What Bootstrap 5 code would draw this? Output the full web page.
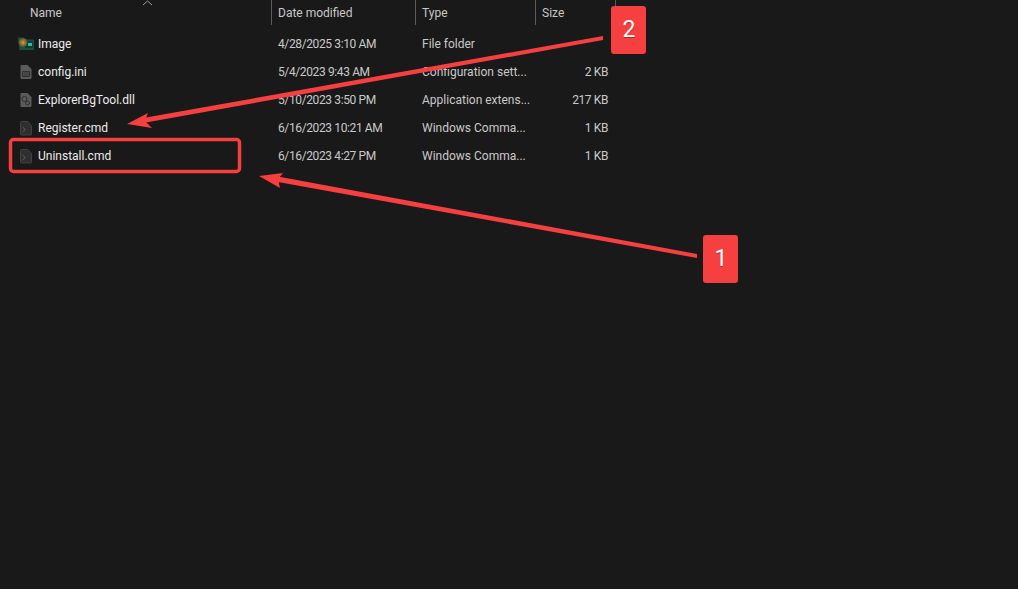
<!DOCTYPE html>
<html lang="en">
<head>
<meta charset="utf-8">
<title>Explorer folder</title>
<link rel="stylesheet" href="https://cdn.jsdelivr.net/npm/bootstrap@5.3.0/dist/css/bootstrap.min.css">
<style>
html, body { height: 100%; }
body { background: #191919; font-family: Roboto, "Noto Sans", sans-serif; font-size: 12px; color: #dcdcdc; overflow: hidden; }
.stage { width: 1018px; height: 589px; }
.file-grid { display: grid; grid-template-columns: 272px 144px 120px 80px; width: 616px; }
.head-cell { height: 25px; padding-left: 6px; color: #c8c8c8; border-right: 1px solid #5c5c5c; line-height: 27px; }
.head-cell.first { padding-left: 30px; }
.cell { height: 28px; line-height: 28px; padding-left: 6px; white-space: nowrap; overflow: hidden; color: #c9c9c9; }
.cell.fname { padding-left: 18px; color: #ececec; gap: 4px; }
.cell.fsize { text-align: right; padding: 0 8px 0 0; letter-spacing: -.4px; }
.cell.fdate { letter-spacing: -.38px; }
.rows-top { margin-top: 5px; }
.sort-caret { position: absolute; left: 142px; top: 0; }
.annot { position: absolute; left: 0; top: 0; pointer-events: none; }
.tag-num { position: absolute; width: 35px; height: 48px; padding-left: 1px; background: #f63f3f; color: #fff; border-radius: 3px; font-size: 23px; text-shadow: 0 1px 0 rgba(90,20,20,.5); }
.tag-one { left: 703px; top: 235px; }
.tag-two { left: 611px; top: 6px; }
</style>
</head>
<body>
<div class="stage position-relative">
  <svg class="sort-caret" width="11" height="6" viewBox="0 0 11 6"><path d="M1 5 L5.5 1 L10 5" fill="none" stroke="#9a9a9a"/></svg>
  <div class="file-grid">
    <div class="head-cell first">Name</div>
    <div class="head-cell">Date modified</div>
    <div class="head-cell">Type</div>
    <div class="head-cell">Size</div>

    <div class="cell fname d-flex align-items-center rows-top">
      <svg width="16" height="16" viewBox="0 0 16 16"><defs><radialGradient id="glow"><stop offset="0" stop-color="#d9a23a"/><stop offset=".6" stop-color="#8f6a2a"/><stop offset="1" stop-color="#3a5a3c"/></radialGradient></defs><path d="M0 1.500h6l1.500 2H15l1 1v9.500H1.500z" fill="#1c4f42"/><rect x="7" y="5" width="8" height="7" fill="#123a34"/><circle cx="5" cy="6.500" r="4.500" fill="url(#glow)"/><rect x="10" y="7" width="4" height="3" fill="#25c0a8"/></svg>
      <span>Image</span></div>
    <div class="cell fdate rows-top">4/28/2025 3:10 AM</div>
    <div class="cell rows-top">File folder</div>
    <div class="cell fsize rows-top"></div>

    <div class="cell fname d-flex align-items-center">
      <svg width="16" height="16" viewBox="0 0 16 16"><path d="M3.500 1h6l4 4v9a1 1 0 0 1-1 1h-9a1 1 0 0 1-1-1V2a1 1 0 0 1 1-1z" fill="#5a5a5a"/><path d="M4.500 7.500h7v5h-7z M5.500 9h5 M5.500 11h5" fill="none" stroke="#2f2f2f"/></svg>
      <span>config.ini</span></div>
    <div class="cell fdate">5/4/2023 9:43 AM</div>
    <div class="cell">Configuration sett...</div>
    <div class="cell fsize">2 KB</div>

    <div class="cell fname d-flex align-items-center">
      <svg width="16" height="16" viewBox="0 0 16 16"><path d="M3.500 1h6l4 4v9a1 1 0 0 1-1 1h-9a1 1 0 0 1-1-1V2a1 1 0 0 1 1-1z" fill="#5a5a5a"/><circle cx="6.500" cy="7" r="2.500" fill="none" stroke="#2f2f2f"/><circle cx="9.500" cy="11" r="2" fill="none" stroke="#2f2f2f"/></svg>
      <span>ExplorerBgTool.dll</span></div>
    <div class="cell fdate">5/10/2023 3:50 PM</div>
    <div class="cell">Application extens...</div>
    <div class="cell fsize">217 KB</div>

    <div class="cell fname d-flex align-items-center">
      <svg width="16" height="16" viewBox="0 0 16 16"><path d="M3.500 1.500h6l4 4v8.500a1 1 0 0 1-1 1h-9a1 1 0 0 1-1-1V2.500a1 1 0 0 1 1-1z" fill="#2f2f2f" stroke="#414141"/><path d="M4.500 7l3 2.500-3 2.500" fill="none" stroke="#5c5c5c"/></svg>
      <span>Register.cmd</span></div>
    <div class="cell fdate">6/16/2023 10:21 AM</div>
    <div class="cell">Windows Comma...</div>
    <div class="cell fsize">1 KB</div>

    <div class="cell fname d-flex align-items-center">
      <svg width="16" height="16" viewBox="0 0 16 16"><path d="M3.500 1.500h6l4 4v8.500a1 1 0 0 1-1 1h-9a1 1 0 0 1-1-1V2.500a1 1 0 0 1 1-1z" fill="#2f2f2f" stroke="#414141"/><path d="M4.500 7l3 2.500-3 2.500" fill="none" stroke="#5c5c5c"/></svg>
      <span>Uninstall.cmd</span></div>
    <div class="cell fdate">6/16/2023 4:27 PM</div>
    <div class="cell">Windows Comma...</div>
    <div class="cell fsize">1 KB</div>
  </div>

  <svg class="annot" width="1018" height="589" viewBox="0 0 1018 589">
    <rect x="10.500" y="139.500" width="229" height="32" rx="3" fill="none" stroke="#f63f3f" stroke-width="3.500"/>
    <path d="M603 36 L146 117.500 L146 122.500 L603 40z" fill="#f63f3f"/>
    <path d="M127 124 L148 113 L146 118 L146 122 L152 128z" fill="#f63f3f"/>
    <path d="M697 254 L278 176.500 L278 182 L697 258z" fill="#f63f3f"/>
    <path d="M259 176 L283 173 L278 179 L280 188z" fill="#f63f3f"/>
  </svg>
  <div class="tag-num tag-one d-flex align-items-center justify-content-center">1</div>
  <div class="tag-num tag-two d-flex align-items-center justify-content-center">2</div>
</div>
<script src="https://cdn.jsdelivr.net/npm/bootstrap@5.3.0/dist/js/bootstrap.bundle.min.js"></script>
</body>
</html>
